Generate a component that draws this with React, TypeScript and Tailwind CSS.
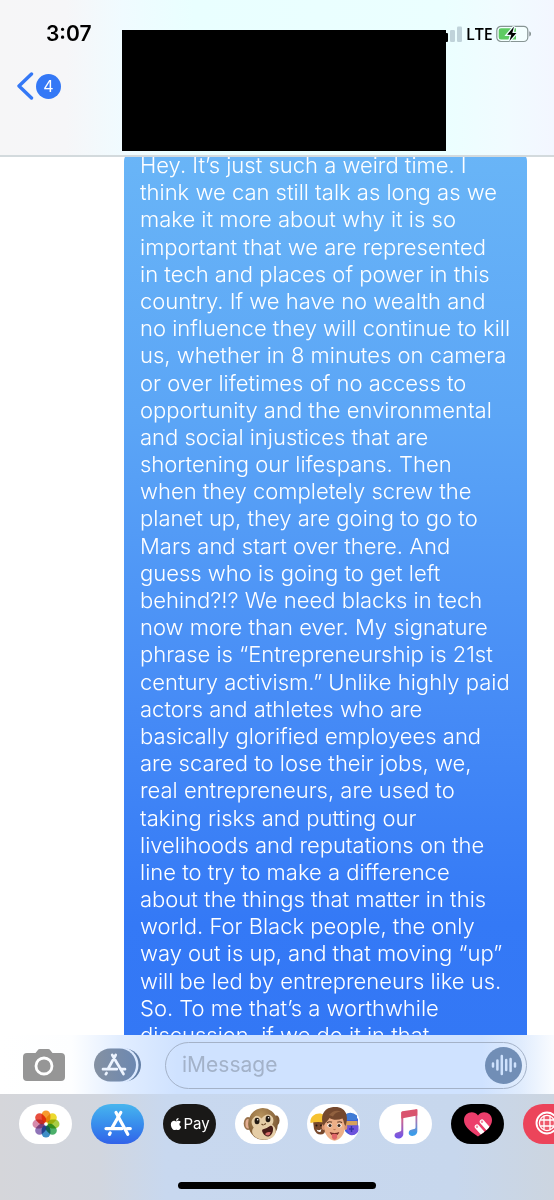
import type { ReactNode } from "react";
import { FaApple } from "react-icons/fa";

const messageLines = [
  "Hey. It’s just such a weird time. I",
  "think we can still talk as long as we",
  "make it more about why it is so",
  "important that we are represented",
  "in tech and places of power in this",
  "country. If we have no wealth and",
  "no influence they will continue to kill",
  "us, whether in 8 minutes on camera",
  "or over lifetimes of no access to",
  "opportunity and the environmental",
  "and social injustices that are",
  "shortening our lifespans. Then",
  "when they completely screw the",
  "planet up, they are going to go to",
  "Mars and start over there. And",
  "guess who is going to get left",
  "behind?!? We need blacks in tech",
  "now more than ever. My signature",
  "phrase is “Entrepreneurship is 21st",
  "century activism.” Unlike highly paid",
  "actors and athletes who are",
  "basically glorified employees and",
  "are scared to lose their jobs, we,",
  "real entrepreneurs, are used to",
  "taking risks and putting our",
  "livelihoods and reputations on the",
  "line to try to make a difference",
  "about the things that matter in this",
  "world. For Black people, the only",
  "way out is up, and that moving “up”",
  "will be led by entrepreneurs like us.",
  "So. To me that’s a worthwhile",
  "discussion, if we do it in that",
];

function SignalBars() {
  return (
    <svg width="17" height="16" viewBox="0 0 17 16" aria-hidden="true">
      <rect x="-4" y="7" width="6" height="9" rx="1" fill="#000" />
      <rect x="4" y="4" width="5" height="12" rx="1.2" fill="#c0d3da" />
      <rect x="11" y="0.5" width="5" height="15.5" rx="1.2" fill="#c0d3da" />
    </svg>
  );
}

function Battery() {
  return (
    <svg width="36" height="18" viewBox="0 0 36 18" aria-hidden="true">
      <rect x="0.8" y="1.3" width="31" height="15.2" rx="4.2" fill="#f4ffff" stroke="#879594" strokeWidth="1.2" />
      <path d="M5 3.2h15v11.400H5a2.300 2.300 0 0 1-2.300-2.300V5.500A2.300 2.300 0 0 1 5 3.200z" fill="#5ecb62" />
      <path d="M33.300 6.300c2.200.9 2.200 4.400 0 5.300z" fill="#7f8b8b" />
      <path d="M18 1.500l-6.800 8.200h4.100L13.400 16l7-7.900h-4.100z" fill="#000" stroke="#f0ffff" strokeWidth="2.600" paintOrder="stroke" />
    </svg>
  );
}

function StoreGlyph() {
  return (
    <svg width="28" height="28" viewBox="0 0 28 28" fill="none" stroke="#fff" strokeWidth="3.2" strokeLinecap="round" aria-hidden="true">
      <path d="M16.800 2.500L8.200 17.600" />
      <path d="M12 2.500L23.800 24.300" />
      <path d="M2 18.600h16M23 18.600H26.300" />
      <path d="M6.200 23L5.400 24.400" />
    </svg>
  );
}

function Camera() {
  return (
    <svg width="42" height="32" viewBox="0 0 42 32" aria-hidden="true">
      <path d="M4 4h8.500l2-2.600Q15.400 0 17 0h8q1.600 0 2.500 1.400l2 2.600H38a4 4 0 0 1 4 4v20a4 4 0 0 1-4 4H4a4 4 0 0 1-4-4V8a4 4 0 0 1 4-4z" fill="#969696" />
      <circle cx="21" cy="17" r="8" fill="none" stroke="#fff" strokeWidth="2.800" />
    </svg>
  );
}

function StorePill() {
  return (
    <svg width="47" height="34" viewBox="0 0 47 34" aria-hidden="true">
      <defs>
        <linearGradient id="store-grey">
          <stop stopColor="#8591a2" />
          <stop offset="1" stopColor="#6c88b1" />
        </linearGradient>
      </defs>
      <rect x="4" y="0.500" width="43" height="33" rx="16.500" fill="#637fa6" />
      <rect x="2" y="-1" width="42.500" height="36" rx="18" fill="#dbe9ff" />
      <rect x="0" y="0.500" width="42" height="33" rx="16.500" fill="url(#store-grey)" />
      <g fill="none" stroke="#edf4ff" strokeWidth="2.700" strokeLinecap="round">
        <path d="M21.700 7L14.500 20M18.200 7L29.500 26M9 21.200h13.800M27.600 21.200H31M12.600 25l-.8 1.200" />
      </g>
    </svg>
  );
}

const petals = ["#f79a2e", "#ecd92f", "#a8cd45", "#4cb06b", "#3f8ec6", "#8f74b8", "#d78aab", "#e84f3f"];

function Photos() {
  return (
    <svg width="28" height="28" viewBox="-14 -14 28 28" aria-hidden="true">
      {petals.map((fill, i) => (
        <rect key={fill} x="-4.400" y="-13.500" width="8.800" height="12" rx="4.400" fill={fill} transform={`rotate(${i * 45})`} className="mix-blend-multiply" />
      ))}
      <circle r="1.500" fill="#fff" />
    </svg>
  );
}

function Monkey() {
  return (
    <svg width="38" height="34" viewBox="0 0 38 34" aria-hidden="true">
      <defs>
        <radialGradient id="fur" cx="45%" cy="25%" r="75%">
          <stop stopColor="#b7935c" />
          <stop offset="1" stopColor="#765331" />
        </radialGradient>
      </defs>
      <ellipse cx="5" cy="16.500" rx="4.300" ry="6.500" fill="#98714b" />
      <ellipse cx="5.200" cy="16.700" rx="2.800" ry="4.700" fill="#e2ae91" />
      <ellipse cx="33.500" cy="13.500" rx="3" ry="5" fill="#7d5835" />
      <ellipse cx="20" cy="17" rx="14.800" ry="16" fill="url(#fur)" transform="rotate(-8 20 17)" />
      <path d="M9.500 12q4-6 9-.5 6-7 11-1.500 2 4-.3 7.500 5 4 3 9.500c-2.500 6-14 8-20.500 2.500-3.500-3.500-3-6.500-1-9-2-3-3-6-1.200-8.500z" fill="#e5cda6" />
      <ellipse cx="14" cy="14" rx="2.500" ry="3.200" fill="#211912" />
      <ellipse cx="25" cy="12" rx="2.400" ry="3.200" fill="#211912" />
      <circle cx="14.700" cy="12.700" r=".8" fill="#fff" />
      <circle cx="25.600" cy="10.700" r=".8" fill="#fff" />
      <path d="M18.800 17.300l1.300.6M22.500 16.700l-1 .7" stroke="#72502e" strokeWidth="1.200" strokeLinecap="round" />
      <path d="M19.500 22.500q4-.8 7.500-3.500c2.500-1.300 3.300 1.500 3 4-.4 4-2.700 6.500-5.300 6.500-3.300 0-6.800-5.500-5.200-7z" fill="#481d18" />
      <path d="M22 27q2-2.800 5.800-1.800-.8 3-2.800 3.300-1.500.2-3-1.500z" fill="#d66d6a" />
    </svg>
  );
}

function Memoji() {
  return (
    <svg width="50" height="36" viewBox="0 0 50 36" aria-hidden="true">
      <path d="M4 15h13v8q-1 5.500-5.500 5.500T5 23z" fill="#77482c" />
      <path d="M1.500 17C0 6 17 4 18 14l-1 3q-8-2-15.500 0z" fill="#f6c231" />
      <circle cx="7.500" cy="19.500" r="1" fill="#25150d" />
      <circle cx="12" cy="19.500" r="1" fill="#25150d" />
      <path d="M7.500 23.500q3 1.500 5-.5l-1 3q-3 .5-4-2.500z" fill="#fff" />
      <path d="M36 10q3-3 10 0l3 3v12q-2 4-6 4t-7-4z" fill="#405ddb" />
      <path d="M36 15h12.500v4.500H36z" fill="#d8a15a" />
      <path d="M35 19.500h14.500V25q-3 5-8.500 4z" fill="#6d52dc" />
      <path d="M36 8.500q6-4 12 1v4.500H36z" fill="#407bd5" />
      <path d="M42.500 20v6M40 23h5" stroke="#3434a8" strokeWidth="1.500" />
      <ellipse cx="14.700" cy="21" rx="2" ry="3" fill="#d9936d" />
      <ellipse cx="36.300" cy="21" rx="2" ry="3" fill="#d9936d" />
      <path d="M15.500 11h20v12c0 6-5 10.800-10 11.800-5-1-10-5.800-10-11.800z" fill="#edaf87" />
      <path d="M14.500 20C11 11 14 3 22 1.500 29 0 36 2 37.500 9c1 4 .2 7.500-1 11-1.800-1.500-1.500-5-3-7.500-5 2-10 1.500-13-.5-1.500 3-4 4-6 8z" fill="#74482e" />
      <path d="M20 9q5-6 12-3.500-6 .5-8 5z" fill="#91613f" />
      <path d="M18 16.700q2.500-1.700 5-.4M28.300 16.300q2.700-1.300 4.700.4" stroke="#63402c" strokeWidth="1.200" fill="none" />
      <ellipse cx="20.700" cy="19.500" rx="2.400" ry="2" fill="#fff" />
      <ellipse cx="30.300" cy="19.500" rx="2.400" ry="2" fill="#fff" />
      <circle cx="21" cy="19.500" r="1.600" fill="#3d281c" />
      <circle cx="30" cy="19.500" r="1.600" fill="#3d281c" />
      <path d="M24.500 23.200q1 .7 2 0" stroke="#bf7856" strokeWidth="1.200" fill="none" />
      <path d="M20.700 26q5 1.800 9.600 0-1 3.700-4.800 3.700T20.700 26z" fill="#702923" />
      <path d="M22.900 28.200q2.600-1 5.200 0v3.300q-.7 2.300-2.600 2.300t-2.600-2.300z" fill="#df6669" />
    </svg>
  );
}

function MusicNote() {
  return (
    <svg width="24" height="30" viewBox="0 0 24 30" aria-hidden="true">
      <defs>
        <linearGradient id="note-left" x1="0" y1="0" x2="0" y2="1">
          <stop stopColor="#e4516c" />
          <stop offset=".35" stopColor="#c76495" />
          <stop offset="1" stopColor="#6c55ee" />
        </linearGradient>
        <linearGradient id="note-right" x1="0" y1="0" x2="0" y2="1">
          <stop stopColor="#e4516c" />
          <stop offset=".35" stopColor="#b472ad" />
          <stop offset=".9" stopColor="#3d9ce9" />
        </linearGradient>
      </defs>
      <path d="M7.300 3.300L9.300 3v22c0 2.500-2.200 4.500-5 4.500C2 29.500.5 28.300.5 26.600c0-2.300 1.800-3.400 4.300-3.700 1.700-.2 2.500-.5 2.500-1.800z" fill="url(#note-left)" />
      <path d="M21.500.5l1.800-.3v22c0 2.700-2.200 4.700-5 4.700-2.200 0-3.600-1.200-3.600-2.900 0-2.300 1.700-3.400 4.300-3.700 1.700-.2 2.500-.5 2.500-1.800z" fill="url(#note-right)" />
      <path d="M7.300 3.500q0-1 1-1.200L22 .2q1.300-.2 1.300 1V6.500L7.300 9.500z" fill="#d9536e" />
    </svg>
  );
}

function TouchHeart() {
  return (
    <svg width="28" height="25" viewBox="0 0 28 25" aria-hidden="true">
      <defs>
        <clipPath id="heart">
          <path d="M14 24.500C5 18.500 0 14 0 8c0-8 10-10.500 14-4.500 4-6 14-3.500 14 4.500 0 6-5 10.500-14 16.500z" />
        </clipPath>
      </defs>
      <g clipPath="url(#heart)">
        <path d="M0 0h28v25H0z" fill="#ec3e6b" />
        <path d="M18 9.800l8 9M13 14.800l7.500 8.500" stroke="#fff" strokeWidth="4.600" strokeLinecap="round" />
        <circle cx="18" cy="9.800" r="1.200" fill="#f28ba6" />
        <circle cx="13" cy="14.800" r="1.200" fill="#f28ba6" />
      </g>
    </svg>
  );
}

function GlobeSearch() {
  return (
    <svg width="30" height="28" viewBox="0 0 30 28" fill="none" stroke="#fff" strokeWidth="1.300" aria-hidden="true">
      <circle cx="12" cy="13" r="10.500" strokeWidth="1.900" />
      <circle cx="12" cy="13" r="7.600" fill="#ee5a6c" />
      <path d="M9 6v14M15 6v14M5.200 10h13.600M5.200 16h13.600" />
      <path d="M20 21l6 6" strokeWidth="3" strokeLinecap="round" />
    </svg>
  );
}

function Waveform() {
  return (
    <svg width="26" height="22" viewBox="0 0 26 22" stroke="#cfe2fd" strokeWidth="2.500" strokeLinecap="round" aria-hidden="true">
      <path d="M2 9.500v3M6.400 6.500v9M10.800 2v18M15.200 6v10M19.600 5v12M24 9.500v3" />
    </svg>
  );
}

function AppPill({ label, className, children }: { label: string; className: string; children: ReactNode }) {
  return (
    <button type="button" aria-label={label} className={`flex h-10 w-[53px] shrink-0 items-center justify-center overflow-hidden rounded-full ${className}`}>
      {children}
    </button>
  );
}

export default function App() {
  return (
    <div className="flex min-h-screen flex-col overflow-hidden bg-white font-['Inter','Liberation_Sans',sans-serif]">
      <header className="flex h-[157px] shrink-0 border-b-2 border-[#d3dadd] bg-[linear-gradient(90deg,#f6f6f7_0%,#f6f6f8_12%,#f0fbff_22%,#e9ffff_35%,#ebffff_80%,#f1fbff_92%,#f3f6ff_100%)]">
        <div className="flex w-[122px] shrink-0 flex-col items-start pt-5">
          <time className="pl-[46px] text-[21px] leading-7 font-semibold">3:07</time>
          <button type="button" aria-label="Back, 4 unread" className="mt-6 ml-4 flex items-center gap-[2px]">
            <svg width="18" height="28" viewBox="0 0 18 28" fill="none" aria-hidden="true">
              <path d="M15.500 2L3 14l12.500 12" stroke="#3478f6" strokeWidth="3.400" strokeLinecap="round" strokeLinejoin="round" />
            </svg>
            <span className="flex size-[25px] items-center justify-center rounded-full bg-[#3478f6] text-[16px] leading-6 text-white">4</span>
          </button>
        </div>
        <div className="mt-[30px] mb-1 flex-1 bg-black" />
        <div className="flex w-[108px] shrink-0 items-center gap-[3px] self-start pt-5">
          <SignalBars />
          <span className="w-[27px] font-['Open_Sans',sans-serif] text-[16px] leading-7 font-semibold">LTE</span>
          <Battery />
        </div>
      </header>

      <main className="flex flex-1 justify-end overflow-hidden pr-[27px] pl-[124px]">
        <p className="-mt-[5px] -mb-[14px] flex flex-1 flex-col justify-between rounded-[9px] bg-[linear-gradient(180deg,#69b5f7_0%,#5ba5f6_30%,#468bf6_62%,#3479f6_86%,#3377f5_100%)] pl-4 text-[22px] leading-[27px] font-[340] whitespace-nowrap text-white">
          {messageLines.map((line) => (
            <span key={line} className="block">{line}</span>
          ))}
        </p>
      </main>

      <form className="z-10 flex h-[59px] shrink-0 items-center bg-[linear-gradient(90deg,#fff_0%,#fdfeff_13%,#e1edff_22%,#cfe2ff_32%,#cfe2ff_87%,#e0ecfd_94%,#fafcff_100%)] pt-px pr-[27px] pl-[23px]">
        <button type="button" aria-label="Camera"><Camera /></button>
        <button type="button" aria-label="Apps" className="ml-[29px]"><StorePill /></button>
        <div className="ml-6 flex h-[47px] min-w-0 flex-1 items-center rounded-full border border-[#a4b2c8] pr-1 pl-4">
          <input aria-label="iMessage" placeholder="iMessage" className="min-w-0 flex-1 bg-transparent text-[21px] leading-7 outline-none placeholder:text-[#a3b2c9]" />
          <button type="button" aria-label="Record audio" className="flex size-[37px] shrink-0 items-center justify-center rounded-full bg-[#718eb6]"><Waveform /></button>
        </div>
      </form>

      <footer className="flex h-[106px] shrink-0 flex-col items-center justify-between overflow-hidden bg-[linear-gradient(90deg,#d5d6da_0%,#d1d6df_18%,#c8d8ef_30%,#c7d7ed_82%,#ccd5e0_100%)] pt-[10px] pb-[11px]">
        <nav aria-label="Message apps" className="flex w-full gap-[19px] overflow-hidden pl-[19px]">
          <AppPill label="Photos" className="bg-white"><Photos /></AppPill>
          <AppPill label="App Store" className="bg-linear-to-b from-[#48b5ee] to-[#3262e9]"><StoreGlyph /></AppPill>
          <AppPill label="Apple Pay" className="bg-[#191817] text-white">
            <FaApple size={14} aria-hidden="true" />
            <span className="text-[15px] leading-5">Pay</span>
          </AppPill>
          <AppPill label="Animoji" className="bg-white"><Monkey /></AppPill>
          <AppPill label="Memoji" className="bg-white"><Memoji /></AppPill>
          <AppPill label="Music" className="bg-white"><MusicNote /></AppPill>
          <AppPill label="Digital Touch" className="bg-black"><TouchHeart /></AppPill>
          <AppPill label="Image search" className="bg-[#ec445a]"><GlobeSearch /></AppPill>
        </nav>
        <div className="h-[7px] w-[198px] rounded-full bg-black" />
      </footer>
    </div>
  );
}
